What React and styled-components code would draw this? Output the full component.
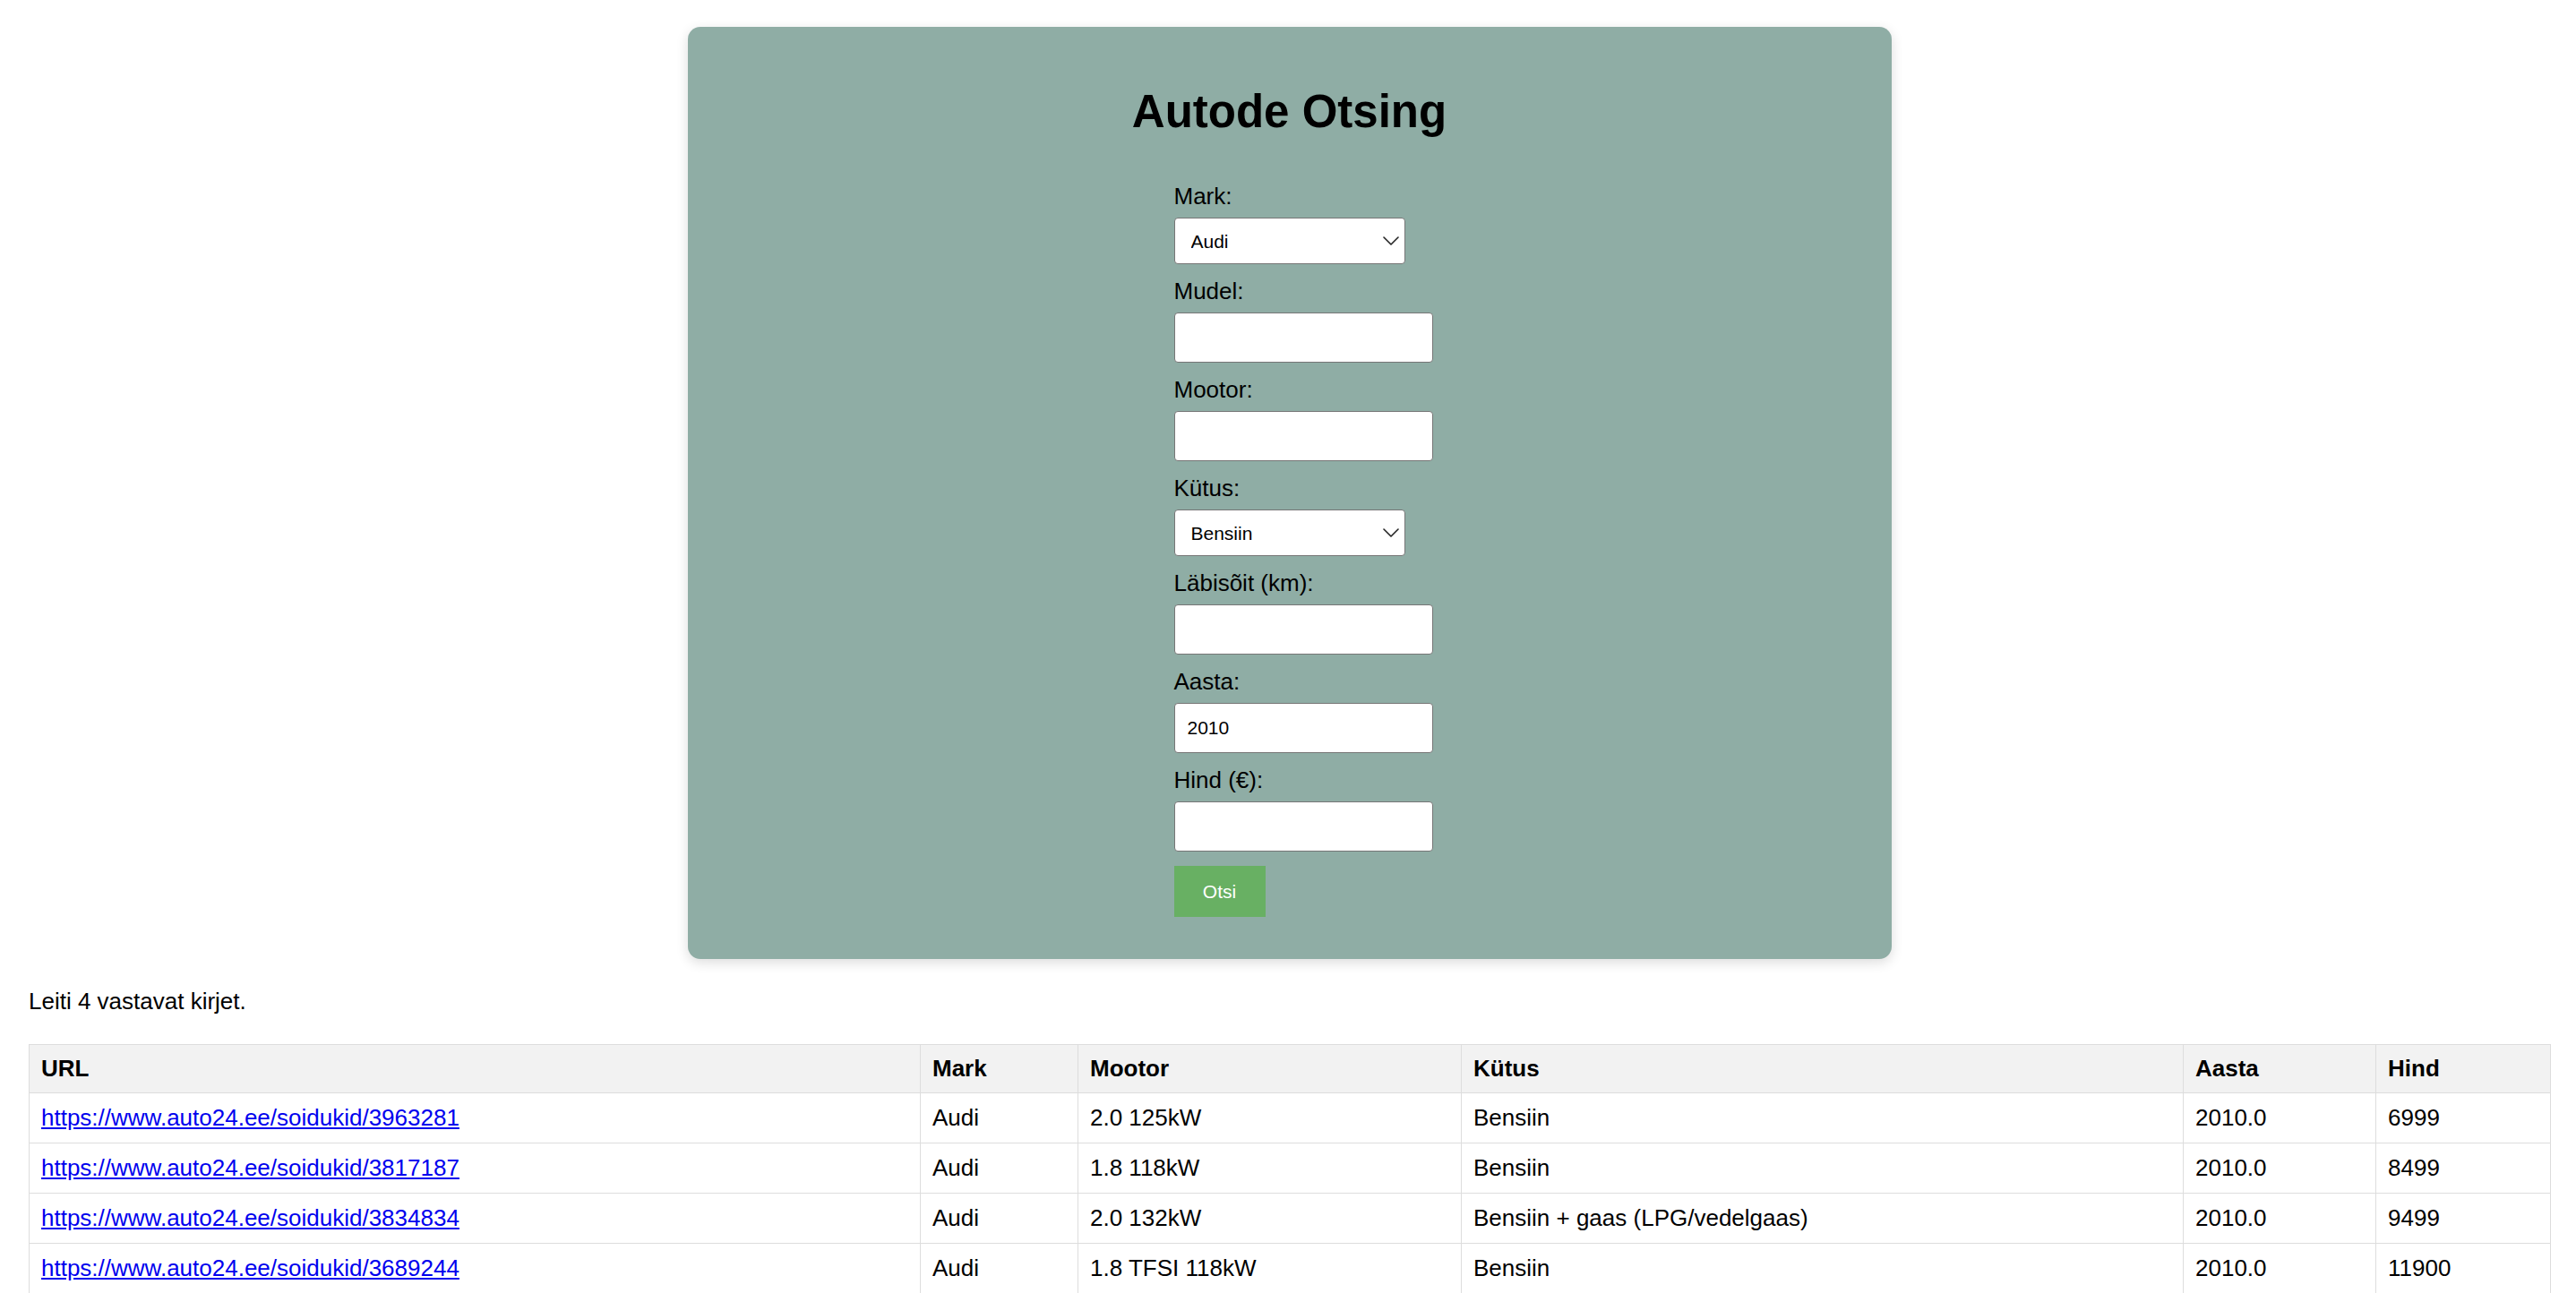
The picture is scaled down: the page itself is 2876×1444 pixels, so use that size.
import React from 'react'
import styled, { createGlobalStyle } from 'styled-components'

const GlobalStyle = createGlobalStyle`
  * { box-sizing: border-box; }
  body {
    margin: 0;
    background: #ffffff;
    font-family: "Liberation Sans", Arial, sans-serif;
    color: #000;
  }
`;

const Page = styled.div`
  padding: 30px 29px 0 32px;
`;

const Card = styled.div`
  width: 1344px;
  margin: 0 auto;
  background-color: #8fada5;
  border-radius: 14px;
  padding: 40px 40px 47px;
  box-shadow: 0 4px 14px rgba(0, 0, 0, 0.14);
`;

const Title = styled.h1`
  margin: 26px 0 50px;
  text-align: center;
  font-size: 51px;
  line-height: 58px;
  font-weight: 700;
`;

const Form = styled.form`
  width: 289px;
  margin-left: 503px;
  display: flex;
  flex-direction: column;
  align-items: flex-start;
`;

const Label = styled.label`
  display: block;
  font-size: 26px;
  line-height: 30px;
  margin-bottom: 9px;
`;

const SelectWrap = styled.div`
  position: relative;
  width: 258px;
  height: 52px;
  margin-bottom: 15px;

  svg {
    position: absolute;
    right: 7px;
    top: 21px;
    pointer-events: none;
  }
`;

const Select = styled.select`
  appearance: none;
  width: 100%;
  height: 100%;
  border: 1px solid #767676;
  border-radius: 4px;
  background: #fff;
  padding: 0 0 0 18px;
  font-family: inherit;
  font-size: 21px;
  color: #000;
`;

const Input = styled.input`
  display: block;
  width: 289px;
  height: 56px;
  margin-bottom: 15px;
  border: 1px solid #767676;
  border-radius: 4px;
  background: #fff;
  padding: 0 14px;
  font-family: inherit;
  font-size: 21px;
  color: #000;
`;

const Button = styled.button`
  border: none;
  border-radius: 0;
  background-color: #68b063;
  color: #fff;
  font-family: inherit;
  font-size: 21px;
  width: 102px;
  height: 57px;
  margin-top: 1px;
  cursor: pointer;
`;

const Result = styled.p`
  margin: 32px 0 33px;
  font-size: 26px;
  line-height: 30px;
`;

const Tabela = styled.table`
  width: 2815px;
  border-collapse: collapse;
  table-layout: fixed;
`;

const Th = styled.th`
  text-align: left;
  font-weight: 700;
  font-size: 26px;
  line-height: 29px;
  padding: 12px 13px;
  background-color: #f2f2f2;
  border: 1px solid #ddd;
`;

const Td = styled.td`
  font-size: 26px;
  line-height: 31px;
  padding: 12px 13px;
  border: 1px solid #ddd;
  white-space: nowrap;
`;

const Link = styled.a`
  color: #0000ee;
  text-decoration: underline;
`;

const columns = [
  { name: 'URL', width: 995 },
  { name: 'Mark', width: 176 },
  { name: 'Mootor', width: 428 },
  { name: 'Kütus', width: 806 },
  { name: 'Aasta', width: 215 },
  { name: 'Hind', width: 195 },
]

const cars = [
  { url: 'https://www.auto24.ee/soidukid/3963281', mark: 'Audi', mootor: '2.0 125kW', kutus: 'Bensiin', aasta: '2010.0', hind: '6999' },
  { url: 'https://www.auto24.ee/soidukid/3817187', mark: 'Audi', mootor: '1.8 118kW', kutus: 'Bensiin', aasta: '2010.0', hind: '8499' },
  { url: 'https://www.auto24.ee/soidukid/3834834', mark: 'Audi', mootor: '2.0 132kW', kutus: 'Bensiin + gaas (LPG/vedelgaas)', aasta: '2010.0', hind: '9499' },
  { url: 'https://www.auto24.ee/soidukid/3689244', mark: 'Audi', mootor: '1.8 TFSI 118kW', kutus: 'Bensiin', aasta: '2010.0', hind: '11900' },
]

const Chevron = () => (
  <svg width="18" height="10" viewBox="0 0 18 10" fill="none">
    <polyline points="1,1 9,9 17,1" stroke="#222" strokeWidth="1.6" strokeLinecap="round" strokeLinejoin="round" />
  </svg>
)

const Dropdown = ({ value, options }) => (
  <SelectWrap>
    <Select defaultValue={value}>
      {options.map((o) => <option key={o}>{o}</option>)}
    </Select>
    <Chevron />
  </SelectWrap>
)

const App = () => {
  return (
    <Page>
      <GlobalStyle />
      <Card>
        <Title>Autode Otsing</Title>
        <Form onSubmit={(e) => e.preventDefault()}>
          <Label>Mark:</Label>
          <Dropdown value="Audi" options={['Audi', 'BMW', 'Volkswagen']} />
          <Label>Mudel:</Label>
          <Input type="text" />
          <Label>Mootor:</Label>
          <Input type="text" />
          <Label>Kütus:</Label>
          <Dropdown value="Bensiin" options={['Bensiin', 'Diisel', 'Elekter']} />
          <Label>Läbisõit (km):</Label>
          <Input type="text" />
          <Label>Aasta:</Label>
          <Input type="text" defaultValue="2010" />
          <Label>Hind (€):</Label>
          <Input type="text" />
          <Button type="submit">Otsi</Button>
        </Form>
      </Card>

      <Result>Leiti 4 vastavat kirjet.</Result>

      <Tabela>
        <colgroup>
          {columns.map((c) => <col key={c.name} style={{ width: c.width }} />)}
        </colgroup>
        <thead>
          <tr>
            {columns.map((c) => <Th key={c.name}>{c.name}</Th>)}
          </tr>
        </thead>
        <tbody>
          {cars.map((item, i) => (
            <tr key={i}>
              <Td><Link href={item.url}>{item.url}</Link></Td>
              <Td>{item.mark}</Td>
              <Td>{item.mootor}</Td>
              <Td>{item.kutus}</Td>
              <Td>{item.aasta}</Td>
              <Td>{item.hind}</Td>
            </tr>
          ))}
        </tbody>
      </Tabela>
    </Page>
  )
}

export default App
